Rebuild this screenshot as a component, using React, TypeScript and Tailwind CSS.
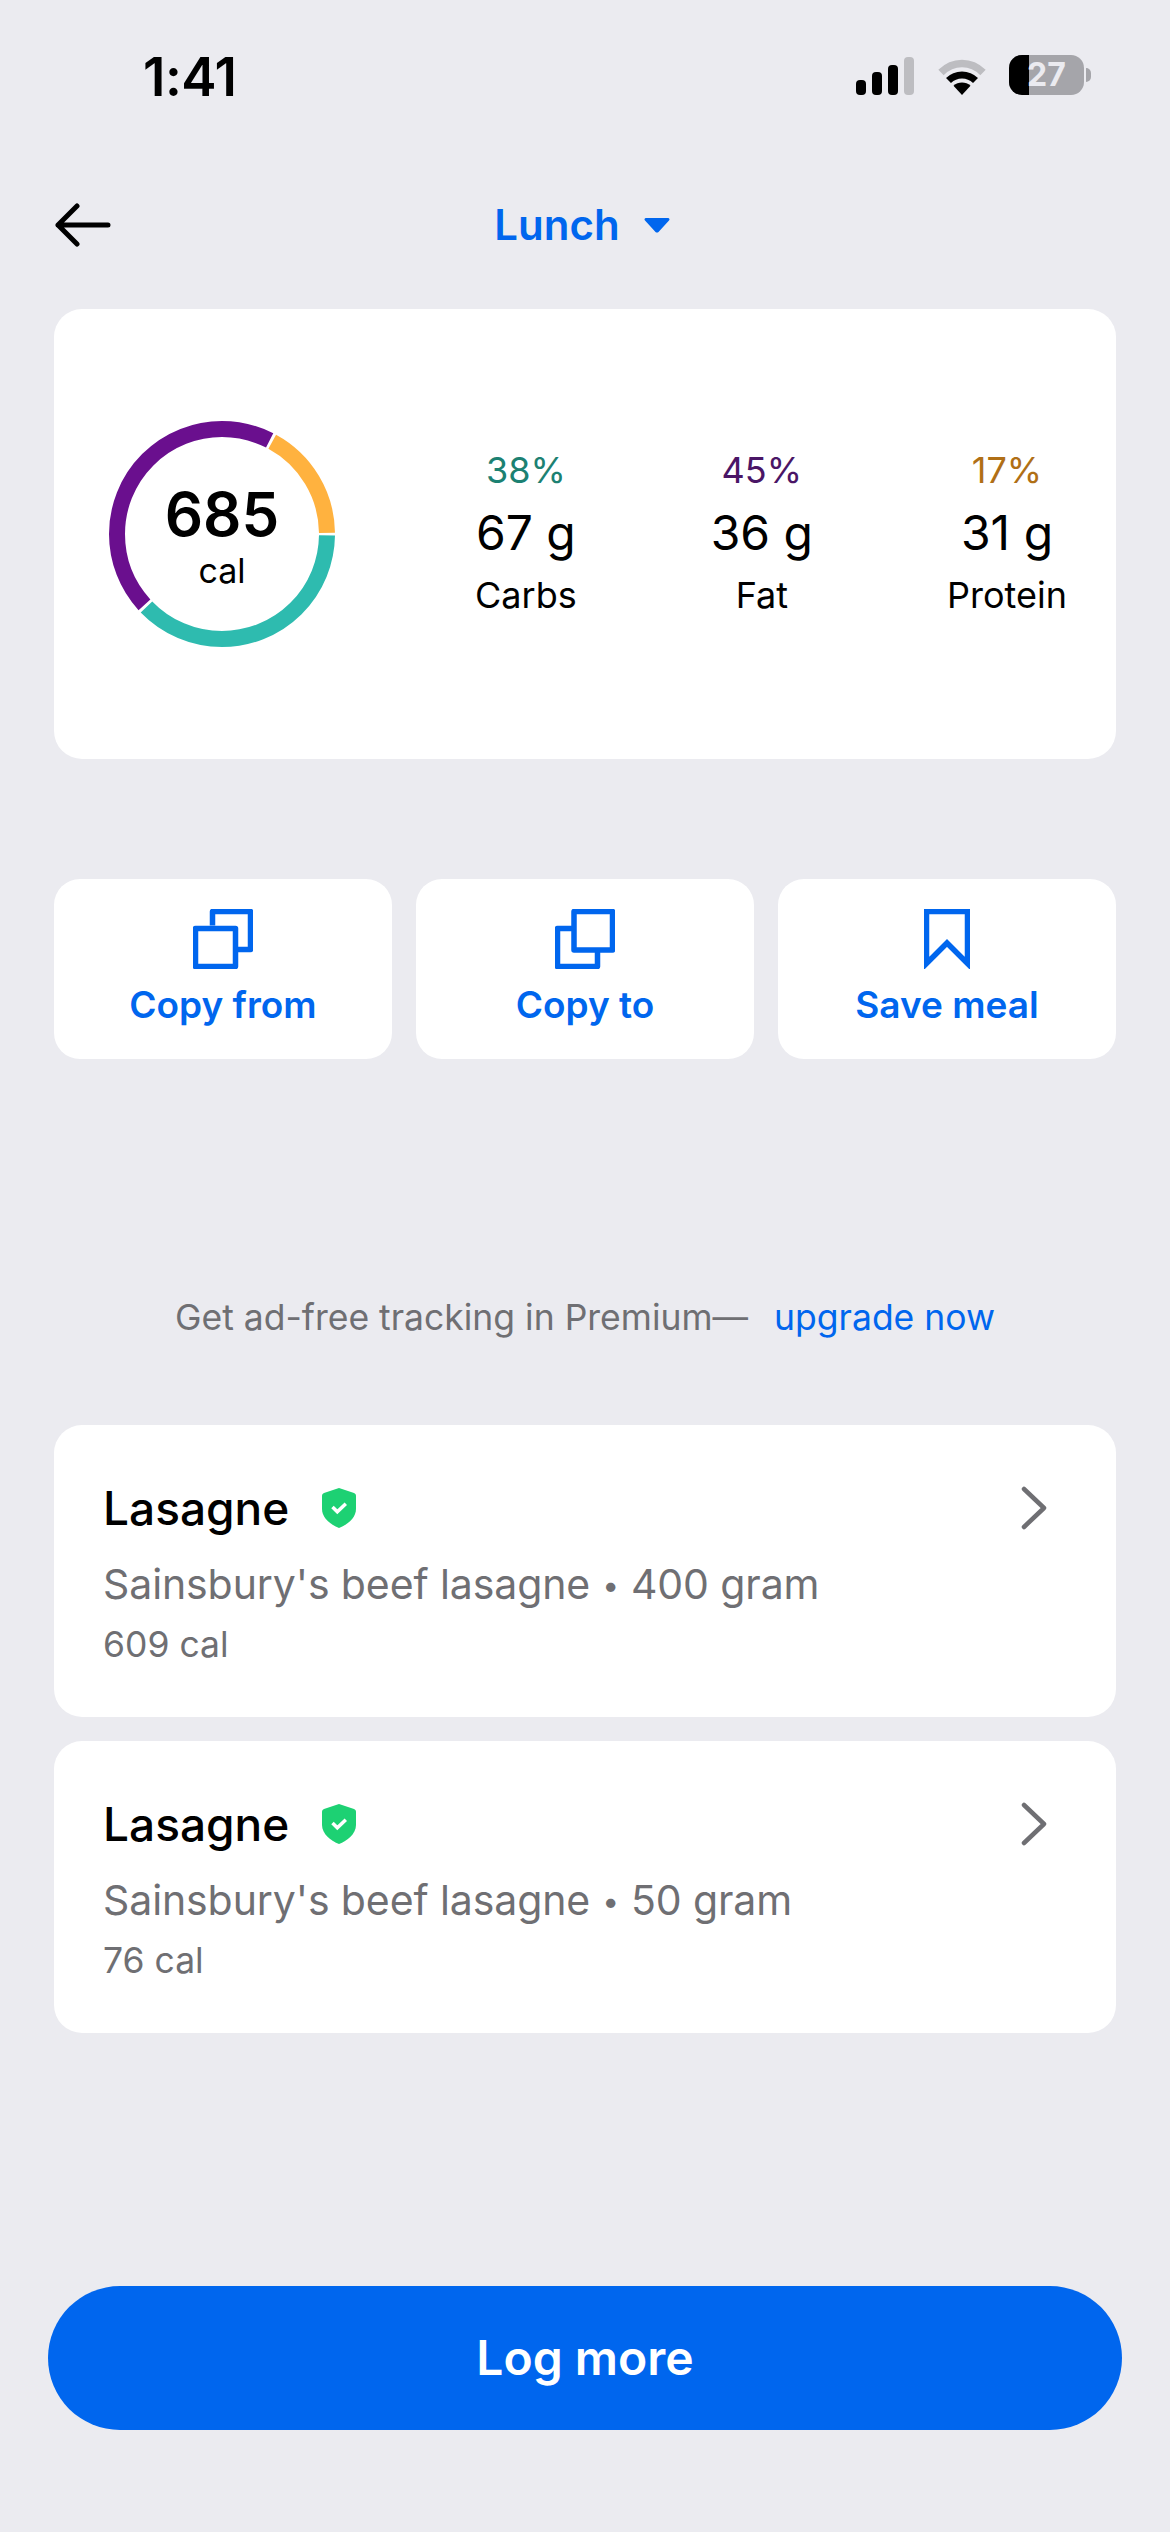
const BLUE = "#0066EE";

function Ring() {
  const segs = [
    { c: "#2EBBAF", from: 0.8, to: 136 },
    { c: "#6A0F8E", from: 137.6, to: 297 },
    { c: "#FFB23F", from: 298.6, to: 359.4 },
  ];
  return (
    <div className="relative w-[226px] h-[226px] shrink-0 ml-[-1px]">
      <svg width="226" height="226" viewBox="0 0 226 226" className="block">
        {segs.map((s) => (
          <circle
            key={s.c}
            cx="113"
            cy="113"
            r="105"
            fill="none"
            stroke={s.c}
            strokeWidth="16"
            pathLength={360}
            strokeDasharray={`${s.to - s.from} ${360 - (s.to - s.from)}`}
            strokeDashoffset={-s.from}
          />
        ))}
      </svg>
      <div className="absolute inset-0 flex flex-col items-center justify-center">
        <div className="text-[60px] leading-[70px] font-semibold text-black mt-[2px]">685</div>
        <div className="text-[34px] leading-[40px] text-black mt-[2px]">cal</div>
      </div>
    </div>
  );
}

function Macro({ pct, color, g, label }: { pct: string; color: string; g: string; label: string }) {
  return (
    <div className="flex flex-col items-center">
      <div className="text-[36px] leading-[42px]" style={{ color }}>{pct}</div>
      <div className="text-[48px] leading-[58px] text-black mt-[13px]">{g}</div>
      <div className="text-[36px] leading-[42px] text-black mt-[12px]">{label}</div>
    </div>
  );
}

function CopyFrom() {
  return (
    <svg width="60" height="60" viewBox="0 0 60 60" fill="none" stroke={BLUE} strokeWidth="5.500" strokeLinejoin="round">
      <path d="M19.500 16.500V2.500h38v38h-15" />
      <rect x="2.500" y="19.500" width="40" height="38" />
    </svg>
  );
}

function CopyTo() {
  return (
    <svg width="60" height="60" viewBox="0 0 60 60" fill="none" stroke={BLUE} strokeWidth="5.500" strokeLinejoin="round">
      <path d="M19 19.500H2.500v38h40V43" />
      <rect x="19" y="2.500" width="38.500" height="38.500" />
    </svg>
  );
}

function Bookmark() {
  return (
    <svg width="46" height="60" viewBox="0 0 46 60" fill="none" stroke={BLUE} strokeWidth="5.500" strokeLinejoin="miter">
      <path d="M2.500 2.500h41v52L23 34 2.500 54.500z" />
    </svg>
  );
}

function ActionCard({ icon, label }: { icon: React.ReactNode; label: string }) {
  return (
    <div className="flex-1 h-[180px] bg-white rounded-[26px] flex flex-col items-center pt-[30px]">
      <div className="h-[60px] flex items-center justify-center">{icon}</div>
      <div className="text-[37px] leading-[46px] font-semibold mt-[13px]" style={{ color: BLUE }}>{label}</div>
    </div>
  );
}

function Shield() {
  return (
    <svg width="34" height="40" viewBox="0 0 34 40">
      <path d="M17 0l15 5c1 .4 2 1.200 2 3v13c0 9-9 16-17 19C9 37 0 30 0 21V8c0-1.800 1-2.600 2-3z" fill="#1DD173" />
      <path d="M10.500 19l4.800 4.800 8.500-8" fill="none" stroke="#fff" strokeWidth="3.500" />
    </svg>
  );
}

function FoodCard({ qty, cal }: { qty: string; cal: string }) {
  return (
    <div className="h-[292px] bg-white rounded-[28px] pl-[49px] pr-[69px] pt-[50px] flex justify-between">
      <div className="flex flex-col">
        <div className="flex items-center gap-[33px] h-[66px]">
          <span className="text-[46px] leading-[66px] font-medium text-black">Lasagne</span>
          <Shield />
        </div>
        <div className="text-[41px] leading-[50px] tracking-[-0.1px] text-[#6F6F73] mt-[18px] whitespace-pre">
          Sainsbury's beef lasagne<span className="mx-[12px] text-[30px] align-[3px]">•</span>{qty}
        </div>
        <div className="text-[35.500px] leading-[42px] text-[#6F6F73] mt-[14px]">{cal}</div>
      </div>
      <div className="h-[66px] flex items-center">
        <svg width="26" height="44" viewBox="0 0 26 44" fill="none" stroke="#6F6F73" strokeWidth="4.500" strokeLinecap="round" strokeLinejoin="round">
          <path d="M3 3l20 19L3 41" />
        </svg>
      </div>
    </div>
  );
}

export default function App() {
  return (
    <div className="w-[1170px] h-[2532px] bg-[#EBEBF0] px-[54px] overflow-hidden" style={{ fontFamily: "Inter, sans-serif" }}>
      <div className="h-[100px] pt-[52px] flex justify-between items-start">
        <div className="text-[53px] leading-[50px] font-semibold text-black ml-[89px] tracking-[-0.5px]">1:41</div>
        <div className="flex items-start mr-[25px] mt-[5px]">
          <svg width="58" height="38" viewBox="0 0 58 38">
            <rect x="0" y="23" width="10" height="15" rx="4" fill="#000" />
            <rect x="16" y="15" width="10" height="23" rx="4" fill="#000" />
            <rect x="32" y="8" width="10" height="30" rx="4" fill="#000" />
            <rect x="48" y="0" width="10" height="38" rx="4" fill="#BDBDC1" />
          </svg>
          <svg width="50" height="38" viewBox="0 0 50 38" className="ml-[23px]" fill="none">
            <path d="M4 15.500C16 3.500 34 3.500 46 15.500" stroke="#BDBDC1" strokeWidth="7.500" />
            <path d="M11.500 23.500C19 16 31 16 38.500 23.500" stroke="#000" strokeWidth="7" />
            <path d="M16.500 28.800C21 24.500 29 24.500 33.500 28.800L25 38z" fill="#000" />
          </svg>
          <div className="relative ml-[22px] mt-[-2px] w-[75px] h-[40px] rounded-[13px] bg-[#A5A5AA] flex items-center justify-center">
            <div className="absolute left-0 top-0 bottom-0 w-[20px] bg-black rounded-l-[13px]" />
            <span className="relative text-[32px] leading-[40px] font-bold text-[#EBEBF0]">27</span>
          </div>
          <div className="w-[5px] h-[14px] mt-[11px] ml-[2px] rounded-r-full bg-[#A5A5AA]" />
        </div>
      </div>

      <div className="mt-[80px] h-[90px] relative flex items-center justify-center">
        <svg width="56" height="44" viewBox="0 0 56 44" className="absolute left-[1px] top-[23px]" fill="none" stroke="#000" strokeWidth="5" strokeLinecap="round" strokeLinejoin="round">
          <path d="M53 22H3M22 3L3 22l19 19" />
        </svg>
        <div className="flex items-center ml-[-6px]">
          <span className="text-[42px] leading-[50px] font-semibold" style={{ color: BLUE }}>Lunch</span>
          <svg width="26" height="16" viewBox="0 0 26 16" className="ml-[24px]">
            <path d="M2 1h22c1.500 0 2 1.500 1 2.500L14.500 15c-.8.800-2.200.800-3 0L1 3.500C0 2.500.5 1 2 1z" fill={BLUE} />
          </svg>
        </div>
      </div>

      <div className="mt-[39px] h-[450px] bg-white rounded-[28px] flex items-center pl-[56px] pr-[49px]">
        <Ring />
        <div className="flex-1 flex justify-between ml-[140px] mt-[-4px]">
          <Macro pct="38%" color="#1C8172" g="67 g" label="Carbs" />
          <Macro pct="45%" color="#4A1566" g="36 g" label="Fat" />
          <Macro pct="17%" color="#B06F16" g="31 g" label="Protein" />
        </div>
      </div>

      <div className="mt-[120px] flex gap-[24px]">
        <ActionCard icon={<CopyFrom />} label="Copy from" />
        <ActionCard icon={<CopyTo />} label="Copy to" />
        <ActionCard icon={<Bookmark />} label="Save meal" />
      </div>

      <div className="mt-[229px] h-[60px] flex items-center justify-center text-[35.500px] leading-[60px]">
        <span className="text-[#6F6F73]">Get ad-free tracking in Premium—</span>
        <span className="ml-[26px]" style={{ color: BLUE }}>upgrade now</span>
      </div>

      <div className="mt-[77px] flex flex-col gap-[24px]">
        <FoodCard qty="400 gram" cal="609 cal" />
        <FoodCard qty="50 gram" cal="76 cal" />
      </div>

      <div className="mt-[253px] -mx-[6px] h-[144px] rounded-[72px] flex items-center justify-center" style={{ background: BLUE }}>
        <span className="text-[48px] leading-[56px] font-semibold text-white">Log more</span>
      </div>
    </div>
  );
}
